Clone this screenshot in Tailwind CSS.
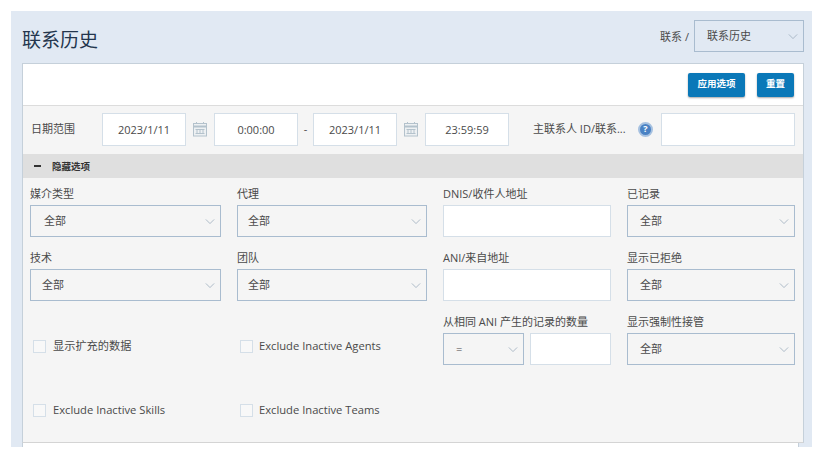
<!DOCTYPE html>
<html lang="zh-CN">
<head>
    <meta charset="UTF-8">
    <title>联系历史</title>
    <script src="https://cdn.jsdelivr.net/npm/@tailwindcss/browser@4"></script>
</head>
<body class="bg-white h-[459px] overflow-hidden font-['Open_Sans','Noto_Sans_CJK_SC',sans-serif] text-[11px] text-[#4a4a4a]">
    <div class="mt-[11px] ml-[11px] w-[801px] h-[436px] bg-[#e1e9f3] pl-[11px] pr-2 flex flex-col">
        <!-- title row -->
        <div class="h-[52px] flex items-start justify-between">
            <h1 class="mt-[15px] text-[19px] leading-[28px] text-[#24364d]">联系历史</h1>
            <div class="mt-[9px] flex items-center gap-[5px]">
                <span class="pt-[3px]">联系 /</span>
                <div class="w-[110px] h-8 border border-[#a9bccf] bg-[#e1e9f3] pl-3 pr-[5px] flex items-center justify-between">
                    <span class="pt-px">联系历史</span>
                    <svg class="w-[10px] h-[5px]" viewBox="0 0 11 6" fill="none" stroke="#a0b0bf"><path d="M.5.5l5 5 5-5"/></svg>
                </div>
            </div>
        </div>

        <!-- main panel -->
        <div class="h-[380px] border border-[#c5d0da] border-b-[#d4d4d4] bg-[#f5f5f5] flex flex-col">
            <div class="h-[41px] bg-white flex justify-end items-start pt-[9px] pr-[9px] gap-[12px]">
                <button class="w-[57px] h-6 pb-px rounded-[2px] bg-[#0a78b8] shadow-[0_1px_2px_rgba(0,0,0,.35)] text-white text-[9.5px] font-bold">应用选项</button>
                <button class="w-[37px] h-6 pb-px rounded-[2px] bg-[#0a78b8] shadow-[0_1px_2px_rgba(0,0,0,.35)] text-white text-[9.5px] font-bold">重置</button>
            </div>

            <!-- date range -->
            <div class="h-[49px] border-t border-[#dcdcdc] flex items-center pl-2 pb-[2px]">
                <span class="w-[71px]">日期范围</span>
                <input class="w-[84px] h-[33px] border border-[#d5dfe8] bg-white text-center outline-none" value="2023/1/11">
                <svg class="w-4 h-4 mx-[6px]" viewBox="0 0 16 16" fill="none" stroke="#b4c2cc"><rect x="1.5" y="2.5" width="13" height="12.5" fill="#eef1f3"/><path d="M1.5 5.5h13" stroke-width="2"/><path d="M3.5 8.5h9M3.5 12.5h9M5 8v5M8 8v5M11 8v5M4.5 1v2M11.5 1v2"/></svg>
                <input class="w-[84px] h-[33px] border border-[#d5dfe8] bg-white text-center outline-none" value="0:00:00">
                <span class="w-[15px] text-center">-</span>
                <input class="w-[84px] h-[33px] border border-[#d5dfe8] bg-white text-center outline-none" value="2023/1/11">
                <svg class="w-4 h-4 mx-[6px]" viewBox="0 0 16 16" fill="none" stroke="#b4c2cc"><rect x="1.5" y="2.5" width="13" height="12.5" fill="#eef1f3"/><path d="M1.5 5.5h13" stroke-width="2"/><path d="M3.5 8.5h9M3.5 12.5h9M5 8v5M8 8v5M11 8v5M4.5 1v2M11.5 1v2"/></svg>
                <input class="w-[84px] h-[33px] border border-[#d5dfe8] bg-white text-center outline-none" value="23:59:59">
                <span class="ml-6 w-[105px] whitespace-nowrap">主联系人 ID/联系...</span>
                <span class="w-[15px] h-[15px] rounded-full bg-[#4a82c4] border-2 border-[#a6c1e0] text-white text-[9px] font-bold flex items-center justify-center">?</span>
                <input class="ml-2 w-[134px] h-[33px] border border-[#d5dfe8] bg-white outline-none">
            </div>

            <!-- hide options bar -->
            <div class="h-[24px] bg-[#dfdfdf] flex items-center pl-[11px] pt-[3px] gap-[11px] text-[9.5px] font-semibold text-[#333]">
                <span class="w-[7px] h-[2px] mb-[4px] bg-[#333]"></span>
                <span>隐藏选项</span>
            </div>

            <!-- options grid -->
            <div class="flex-1 pl-[7px] pt-[3px] grid grid-cols-[191px_190px_168px_168px] gap-x-4 auto-rows-[64px]">
                <div>
                    <div class="pt-[2px] leading-[22px]">媒介类型</div>
                    <div class="h-8 border border-[#a9bccf] pl-[13px] pr-[5px] flex items-center justify-between"><span>全部</span><svg class="w-[10px] h-[5px]" viewBox="0 0 11 6" fill="none" stroke="#a0b0bf"><path d="M.5.5l5 5 5-5"/></svg></div>
                </div>
                <div>
                    <div class="pt-[2px] leading-[22px]">代理</div>
                    <div class="h-8 border border-[#a9bccf] pl-[10px] pr-[5px] flex items-center justify-between"><span>全部</span><svg class="w-[10px] h-[5px]" viewBox="0 0 11 6" fill="none" stroke="#a0b0bf"><path d="M.5.5l5 5 5-5"/></svg></div>
                </div>
                <div>
                    <div class="pt-[2px] leading-[22px]">DNIS/收件人地址</div>
                    <input class="block w-full h-8 border border-[#d5dfe8] bg-white outline-none">
                </div>
                <div>
                    <div class="pt-[2px] leading-[22px]">已记录</div>
                    <div class="h-8 border border-[#a9bccf] pl-3 pr-[5px] flex items-center justify-between"><span>全部</span><svg class="w-[10px] h-[5px]" viewBox="0 0 11 6" fill="none" stroke="#a0b0bf"><path d="M.5.5l5 5 5-5"/></svg></div>
                </div>

                <div>
                    <div class="pt-[2px] leading-[22px]">技术</div>
                    <div class="h-8 border border-[#a9bccf] pl-[11px] pr-[5px] flex items-center justify-between"><span>全部</span><svg class="w-[10px] h-[5px]" viewBox="0 0 11 6" fill="none" stroke="#a0b0bf"><path d="M.5.5l5 5 5-5"/></svg></div>
                </div>
                <div>
                    <div class="pt-[2px] leading-[22px]">团队</div>
                    <div class="h-8 border border-[#a9bccf] pl-[10px] pr-[5px] flex items-center justify-between"><span>全部</span><svg class="w-[10px] h-[5px]" viewBox="0 0 11 6" fill="none" stroke="#a0b0bf"><path d="M.5.5l5 5 5-5"/></svg></div>
                </div>
                <div>
                    <div class="pt-[2px] leading-[22px]">ANI/来自地址</div>
                    <input class="block w-full h-8 border border-[#d5dfe8] bg-white outline-none">
                </div>
                <div>
                    <div class="pt-[2px] leading-[22px]">显示已拒绝</div>
                    <div class="h-8 border border-[#a9bccf] pl-3 pr-[5px] flex items-center justify-between"><span>全部</span><svg class="w-[10px] h-[5px]" viewBox="0 0 11 6" fill="none" stroke="#a0b0bf"><path d="M.5.5l5 5 5-5"/></svg></div>
                </div>

                <label class="flex items-center gap-[7px] pl-[3px] pt-[10px] text-[11.2px]"><span class="w-[13px] h-[13px] border border-[#d5dfe8] bg-[#f8f8f8]"></span>显示扩充的数据</label>
                <label class="flex items-center gap-[6px] pl-[3px] pt-[10px] text-[11.2px]"><span class="w-[13px] h-[13px] border border-[#d5dfe8] bg-[#f8f8f8]"></span>Exclude Inactive Agents</label>
                <div>
                    <div class="pt-[2px] leading-[22px] whitespace-nowrap">从相同 ANI 产生的记录的数量</div>
                    <div class="flex gap-[6px]">
                        <div class="w-[81px] h-8 border border-[#a9bccf] pl-3 pr-[5px] flex items-center justify-between"><span>=</span><svg class="w-[10px] h-[5px]" viewBox="0 0 11 6" fill="none" stroke="#a0b0bf"><path d="M.5.5l5 5 5-5"/></svg></div>
                        <input class="w-[81px] h-8 border border-[#d5dfe8] bg-white outline-none">
                    </div>
                </div>
                <div>
                    <div class="pt-[2px] leading-[22px]">显示强制性接管</div>
                    <div class="h-8 border border-[#a9bccf] pl-3 pr-[5px] flex items-center justify-between"><span>全部</span><svg class="w-[10px] h-[5px]" viewBox="0 0 11 6" fill="none" stroke="#a0b0bf"><path d="M.5.5l5 5 5-5"/></svg></div>
                </div>

                <label class="flex items-center gap-[7px] pl-[3px] pt-[10px] text-[11.2px]"><span class="w-[13px] h-[13px] border border-[#d5dfe8] bg-[#f8f8f8]"></span>Exclude Inactive Skills</label>
                <label class="flex items-center gap-[6px] pl-[3px] pt-[10px] text-[11.2px]"><span class="w-[13px] h-[13px] border border-[#d5dfe8] bg-[#f8f8f8]"></span>Exclude Inactive Teams</label>
            </div>
        </div>

        <!-- next panel peeking out below -->
        <div class="h-1 w-[777px] bg-white border-x border-[#c5d0da]"></div>
    </div>
</body>
</html>
